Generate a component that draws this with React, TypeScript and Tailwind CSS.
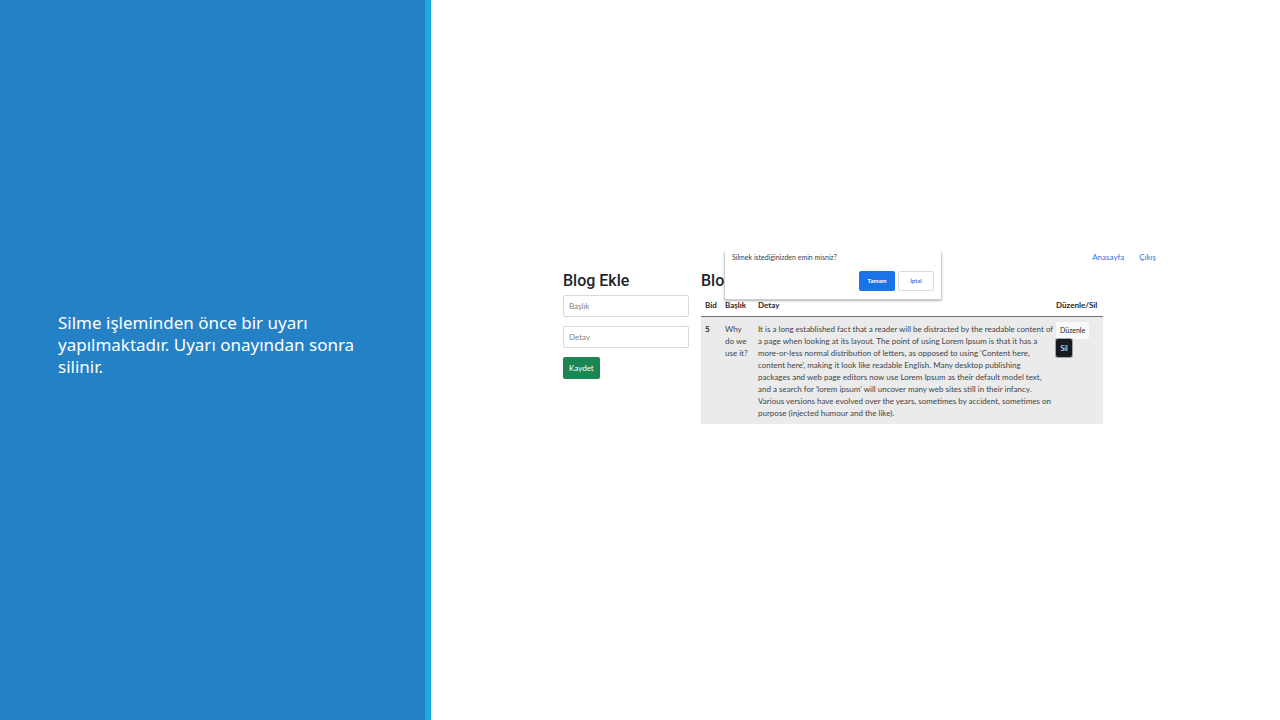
import type { ReactNode } from 'react';

const detailLines = [
  'It is a long established fact that a reader will be distracted by the readable content of',
  'a page when looking at its layout. The point of using Lorem Ipsum is that it has a',
  "more-or-less normal distribution of letters, as opposed to using 'Content here,",
  "content here', making it look like readable English. Many desktop publishing",
  'packages and web page editors now use Lorem Ipsum as their default model text,',
  "and a search for 'lorem ipsum' will uncover many web sites still in their infancy.",
  'Various versions have evolved over the years, sometimes by accident, sometimes on',
  'purpose (injected humour and the like).',
];

function Heading({ children }: { children: ReactNode }) {
  return <h2 className="font-['Roboto',sans-serif] text-[16px] leading-[23px] font-medium whitespace-nowrap text-[#212529]">{children}</h2>;
}

function Field({ id, label }: { id: string; label: string }) {
  return (
    <input
      id={id}
      aria-label={label}
      placeholder={label}
      className="h-[22px] w-full rounded-xs border border-[#d5dade] bg-white px-[5px] placeholder:text-[#7c838a]"
    />
  );
}

function ConfirmDialog() {
  return (
    <div
      role="dialog"
      aria-label="Silme onayı"
      className="absolute top-0 left-[161px] w-[218px] rounded-b-xs border border-t-0 border-[#cfcfcf] bg-white px-[7px] pb-2 shadow-[0_1px_2px_rgba(0,0,0,0.3)]"
    >
      <p className="text-[7px] leading-[10px] text-[#3c4043]">Silmek istediğinizden emin misniz?</p>
      <div className="mt-[9px] flex justify-end gap-[3px] text-[6px]">
        <button className="h-5 w-9 rounded-xs bg-[#1a73e8] font-bold text-white">Tamam</button>
        <button className="h-5 w-9 rounded-xs border border-[#dadce0] bg-white font-medium text-[#1a60e8]">İptal</button>
      </div>
    </div>
  );
}

export default function App() {
  return (
    <main className="flex min-h-screen bg-white">
      <aside className="flex w-[431px] shrink-0 items-center border-r-6 border-[#20a8e0] bg-[#2581c6] pr-12 pb-[30px] pl-[58px]">
        <p className="font-['Noto_Sans',sans-serif] text-[17px] leading-[22px] text-white">
          Silme işleminden önce bir uyarı
          <br />
          yapılmaktadır. Uyarı onayından sonra
          <br />
          silinir.
        </p>
      </aside>

      <section className="flex-1 pt-[252px] pr-[124px] pl-[132px] font-['Lato','Noto_Sans',sans-serif] text-[8px] leading-[12px] text-[#212529]">
        <div className="relative">
          <nav className="flex h-[17px] justify-end gap-[15px] leading-[10px] text-[#2f74dd]">
            <a href="#anasayfa">Anasayfa</a>
            <a href="#cikis">Çıkış</a>
          </nav>
          <div className="flex gap-3">
            <form className="w-[126px] shrink-0" onSubmit={(event) => event.preventDefault()}>
              <Heading>Blog Ekle</Heading>
              <div className="mt-[3px] flex flex-col items-start gap-[9px]">
                <Field id="baslik" label="Başlık" />
                <Field id="detay" label="Detay" />
                <button className="h-[22px] rounded-xs bg-[#198754] px-[6px] text-white">Kaydet</button>
              </div>
            </form>

            <div className="w-[402px] shrink-0">
              <Heading>Blog Listesi</Heading>
              <table className="mt-[3px] w-full table-fixed border-collapse text-left">
                <colgroup>
                  <col className="w-5" />
                  <col className="w-[33px]" />
                  <col />
                  <col className="w-[51px]" />
                </colgroup>
                <thead>
                  <tr className="h-[21px] border-b border-[#6f7274] whitespace-nowrap">
                    <th className="pl-1">Bid</th>
                    <th className="pl-1">Başlık</th>
                    <th className="pl-1">Detay</th>
                    <th className="pl-1">Düzenle/Sil</th>
                  </tr>
                </thead>
                <tbody>
                  <tr className="bg-[#ebebeb] align-top whitespace-nowrap text-[#404448]">
                    <th className="pt-[6px] pb-[5px] pl-1 text-[#212529]">5</th>
                    <td className="pt-[6px] pb-[5px] pl-1">
                      Why
                      <br />
                      do we
                      <br />
                      use it?
                    </td>
                    <td className="pt-[6px] pb-[5px] pl-1">
                      {detailLines.map((line) => (
                        <span key={line} className="block">
                          {line}
                        </span>
                      ))}
                    </td>
                    <td className="pt-[5px] pl-1">
                      <div className="flex flex-col items-start text-[7px]">
                        <button className="h-[17px] rounded-xs bg-[#f8f9fa] px-1 text-[#212529]">Düzenle</button>
                        <button className="h-[18px] w-4 rounded-xs bg-[#171b1f] text-white shadow-[0_0_0_1px_rgba(60,65,70,0.45)]">
                          Sil
                        </button>
                      </div>
                    </td>
                  </tr>
                </tbody>
              </table>
            </div>
          </div>
          <ConfirmDialog />
        </div>
      </section>
    </main>
  );
}
